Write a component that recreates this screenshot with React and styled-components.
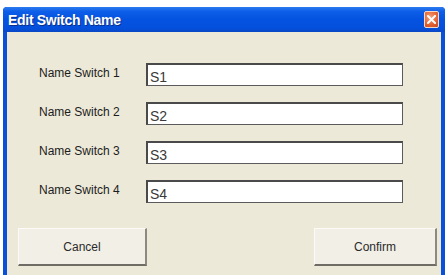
import React from "react";
import styled, { createGlobalStyle } from "styled-components";

const GlobalStyle = createGlobalStyle`
  html, body {
    margin: 0;
    padding: 0;
    background: #ffffff;
    overflow: hidden;
  }
`;

const switches = ["S1", "S2", "S3", "S4"];

const App = () => {
  return (
    <>
      <GlobalStyle />
      <Page>
        <Window>
          <TitleBar>
            <Title>Edit Switch Name</Title>
            <CloseButton aria-label="Close">
              <svg width="9" height="9" viewBox="0 0 9 9">
                <path
                  d="M1 1 L8 8 M8 1 L1 8"
                  stroke="#ffffff"
                  strokeWidth="2"
                  strokeLinecap="square"
                />
              </svg>
            </CloseButton>
          </TitleBar>
          <Body>
            <Form>
              {switches.map((value, index) => (
                <Row key={value}>
                  <Label>Name Switch {index + 1}</Label>
                  <TextBox defaultValue={value} />
                </Row>
              ))}
            </Form>
            <ButtonBar>
              <DialogButton>Cancel</DialogButton>
              <DialogButton $narrow>Confirm</DialogButton>
            </ButtonBar>
          </Body>
        </Window>
      </Page>
    </>
  );
};

const Page = styled.div`
  padding: 7px 0 0 3px;
  height: 275px;
  box-sizing: border-box;
  overflow: hidden;
  font-family: "Liberation Sans", Arial, sans-serif;
`;

const Window = styled.div`
  width: 442px;
  height: 268px;
  display: flex;
  flex-direction: column;
  background: #0a4fd8;
  border-radius: 4px 4px 0 0;
  box-sizing: border-box;
  padding: 0 4px;
`;

const TitleBar = styled.div`
  height: 25px;
  flex-shrink: 0;
  margin: 0 -4px;
  padding: 0 6px 0 5px;
  display: flex;
  align-items: center;
  justify-content: space-between;
  border-radius: 4px 4px 0 0;
  background: linear-gradient(
    to bottom,
    #2c7bf0 0%,
    #0d5ee8 18%,
    #0453e0 50%,
    #0450dc 85%,
    #0a47c4 100%
  );
`;

const Title = styled.span`
  color: #ffffff;
  font-weight: bold;
  font-size: 14px;
  letter-spacing: -0.3px;
  text-shadow: 1px 1px 0 #0a2f8a;
`;

const CloseButton = styled.div`
  width: 13px;
  height: 15px;
  display: flex;
  align-items: center;
  justify-content: center;
  border: 1px solid #f3d8c8;
  border-radius: 2px;
  background: radial-gradient(circle at 40% 35%, #f3a07c 0%, #e4602f 60%, #c44a22 100%);
`;

const Body = styled.div`
  flex: 1;
  min-height: 0;
  background: #ece9d8;
  padding: 31px 4px 0 11px;
  display: flex;
  flex-direction: column;
`;

const Form = styled.div`
  display: flex;
  flex-direction: column;
  gap: 16px;
  padding-left: 21px;
`;

const Row = styled.div`
  display: flex;
  align-items: center;
  height: 23px;
`;

const Label = styled.label`
  width: 107px;
  font-size: 12px;
  color: #1c1c1c;
  margin-top: -3px;
`;

const TextBox = styled.input`
  width: 257px;
  height: 23px;
  box-sizing: border-box;
  border: 1px solid #5b5b5b;
  border-top: 2px solid #4a4a4a;
  border-left: 2px solid #4a4a4a;
  background: #ffffff;
  padding: 3px 3px 0 2px;
  font-family: "Liberation Sans", Arial, sans-serif;
  font-size: 14px;
  color: #3a3a3a;
  outline: none;
`;

const ButtonBar = styled.div`
  display: flex;
  justify-content: space-between;
  margin-top: 25px;
`;

const DialogButton = styled.button`
  width: ${(p) => (p.$narrow ? "123px" : "129px")};
  height: 38px;
  background: #f1efe6;
  border: none;
  border-top: 1px solid #fbfaf6;
  border-left: 1px solid #fbfaf6;
  border-right: 2px solid #8c8a80;
  border-bottom: 2px solid #6e6c64;
  font-family: "Liberation Sans", Arial, sans-serif;
  font-size: 12px;
  color: #2a2a2a;
  padding: 0;
`;

export default App;
